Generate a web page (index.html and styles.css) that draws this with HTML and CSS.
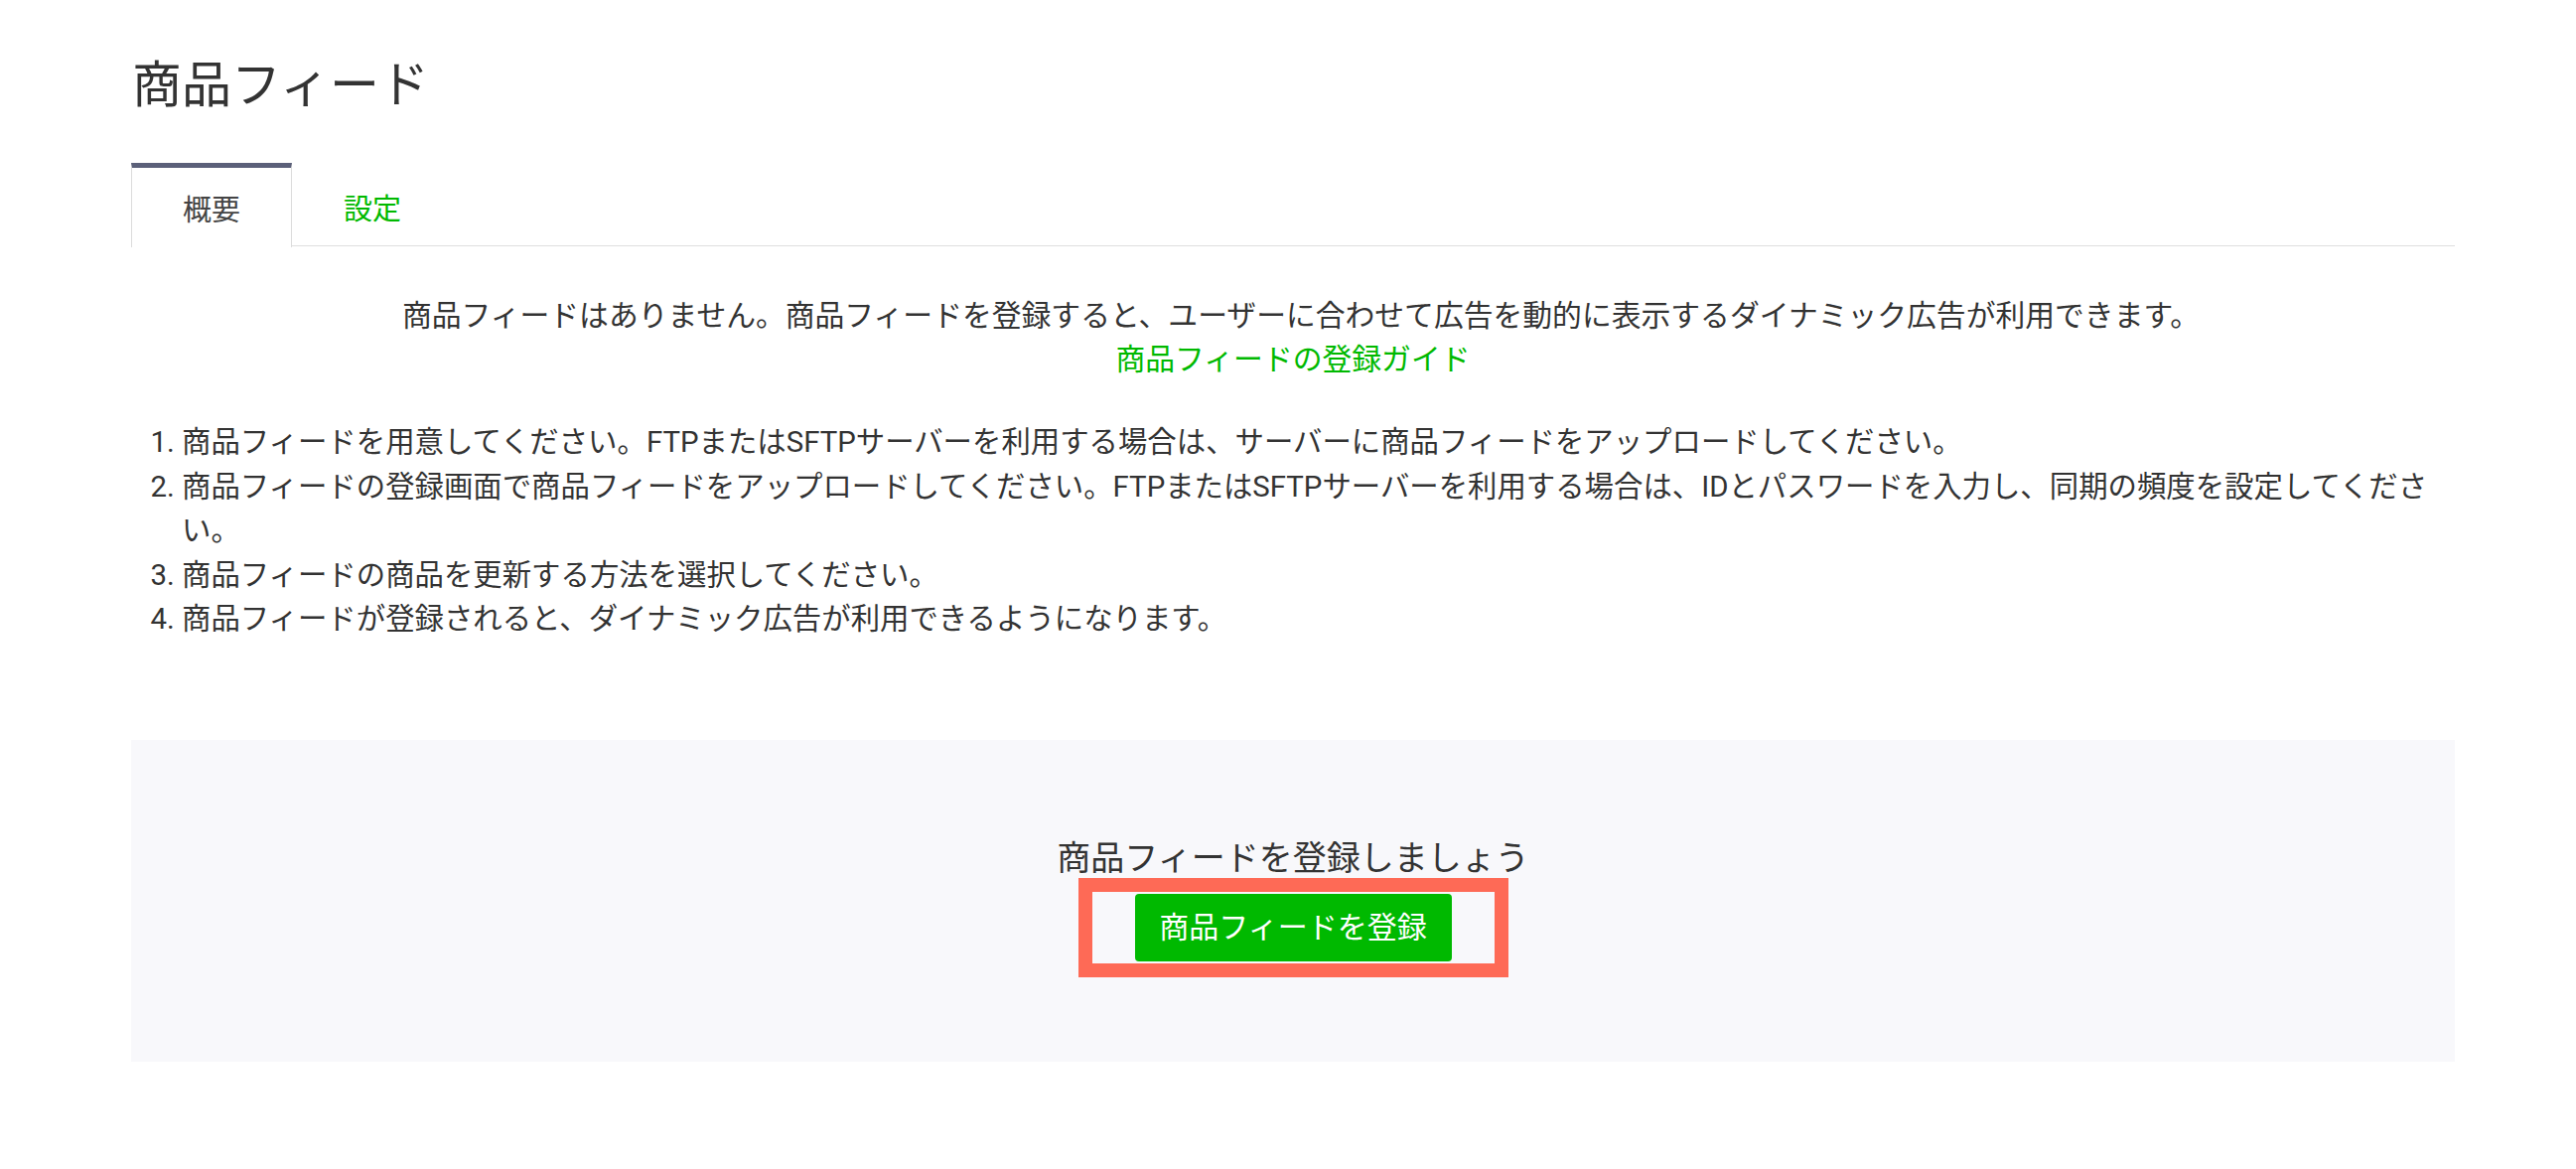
FILE: index.html
```html
<!DOCTYPE html>
<html lang="ja">
<head>
<meta charset="utf-8">
<title>商品フィード</title>
<link rel="stylesheet" href="styles.css">
</head>
<body>
<div class="page">
  <h1 class="title">商品フィード</h1>
  <div class="tabs">
    <div class="tab active">概要</div>
    <div class="tab">設定</div>
  </div>
  <div class="intro">
    <p class="intro-text">商品フィードはありません。商品フィードを登録すると、ユーザーに合わせて広告を動的に表示するダイナミック広告が利用できます。</p>
    <p><a class="link" href="#">商品フィードの登録ガイド</a></p>
  </div>
  <ol class="steps">
    <li>商品フィードを用意してください。FTPまたはSFTPサーバーを利用する場合は、サーバーに商品フィードをアップロードしてください。</li>
    <li>商品フィードの登録画面で商品フィードをアップロードしてください。FTPまたはSFTPサーバーを利用する場合は、IDとパスワードを入力し、同期の頻度を設定してください。</li>
    <li>商品フィードの商品を更新する方法を選択してください。</li>
    <li>商品フィードが登録されると、ダイナミック広告が利用できるようになります。</li>
  </ol>
  <div class="empty">
    <div class="empty-title">商品フィードを登録しましょう</div>
    <div class="highlight">
      <button class="btn" type="button">商品フィードを登録</button>
    </div>
  </div>
</div>
</body>
</html>
```

FILE: styles.css
```css
* { box-sizing: border-box; }
html, body {
  margin: 0;
  padding: 0;
  background: #ffffff;
}
body {
  font-family: "Roboto", "Noto Sans CJK JP", sans-serif;
  color: #333333;
}
.page {
  width: 2340px;
  margin-left: 132px;
}
.title {
  margin: 56px 0 0 0;
  font-size: 50px;
  line-height: 60px;
  font-weight: 400;
  color: #333333;
  padding-left: 1px;
}
.tabs {
  display: flex;
  margin-top: 48px;
  border-bottom: 1px solid #dedede;
  height: 84px;
}
.tab {
  width: 162px;
  height: 84px;
  display: flex;
  align-items: center;
  justify-content: center;
  font-size: 29px;
  color: #00b900;
  border-top: 5px solid transparent;
  padding-bottom: 1px;
}
.tab.active {
  color: #444444;
  background: #ffffff;
  border-top-color: #5b6079;
  border-left: 1px solid #dcdcdc;
  border-right: 1px solid #dcdcdc;
  height: 85px;
  margin-bottom: -1px;
}
.intro {
  margin-top: 48px;
  text-align: center;
  font-size: 29.8px;
  line-height: 44px;
}
.intro p {
  margin: 0;
}
.intro .intro-text {
  padding-left: 16px;
}
.link {
  color: #00b900;
  text-decoration: none;
}
.steps {
  margin: 39px 0 0 0;
  padding-left: 51px;
  font-size: 29.4px;
  line-height: 44.5px;
  color: #333333;
}
.empty {
  margin-top: 99px;
  background: #f8f8fb;
  height: 324px;
  padding-top: 99px;
  display: flex;
  flex-direction: column;
  align-items: center;
}
.empty-title {
  font-size: 34px;
  line-height: 40px;
  color: #333333;
}
.highlight {
  border: 14px solid #fe6a56;
  padding: 2px 43px;
  display: flex;
}
.btn {
  font-family: "Roboto", "Noto Sans CJK JP", sans-serif;
  font-size: 30px;
  color: #ffffff;
  background: #00b900;
  border: none;
  border-radius: 4px;
  height: 68px;
  width: 319px;
  padding: 0;
  margin: 0;
  line-height: 68px;
}
```
